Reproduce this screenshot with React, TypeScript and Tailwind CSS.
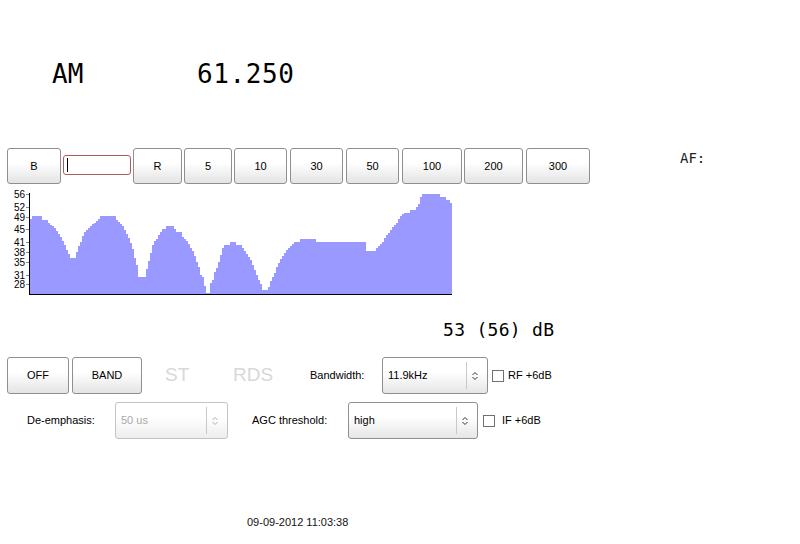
import React from "react";

const UI = "font-['Liberation_Sans',Arial,sans-serif]";
const MONO = "font-['DejaVu_Sans_Mono',monospace]";

const TOP: { label?: string; input?: boolean; cls: string }[] = [
  { label: "B", cls: "ml-[7px] w-[54px]" },
  { input: true, cls: "ml-[2px] w-[68px]" },
  { label: "R", cls: "ml-[2px] w-[49px]" },
  { label: "5", cls: "ml-[2px] w-[48px]" },
  { label: "10", cls: "ml-[2px] w-[53px]" },
  { label: "30", cls: "ml-[3px] w-[53px]" },
  { label: "50", cls: "ml-[3px] w-[53px]" },
  { label: "100", cls: "ml-[3px] w-[60px]" },
  { label: "200", cls: "ml-[2px] w-[59px]" },
  { label: "300", cls: "ml-[3px] w-[64px]" },
];

// signal strength samples (page x, page y of the top of the fill)
const PTS: [number, number][] = [
  [30, 219], [32, 216], [40, 216], [41, 220], [47, 220], [48, 223], [52, 226], [55, 229],
  [57, 232], [60, 237], [63, 243], [65, 247], [67, 252], [70, 258], [74, 258], [75, 255],
  [77, 248], [80, 242], [83, 233], [87, 229], [91, 225], [95, 222], [98, 219], [99, 216],
  [115, 216], [116, 220], [119, 223], [123, 227], [125, 232], [128, 238], [131, 245],
  [133, 253], [135, 262], [137, 268], [138, 277], [139, 280], [140, 277], [144, 277],
  [145, 274], [147, 264], [149, 257], [151, 248], [153, 242], [156, 239], [158, 235],
  [160, 232], [162, 229], [165, 229], [166, 226], [173, 226], [174, 229], [175, 232],
  [180, 232], [181, 236], [184, 239], [187, 242], [189, 246], [192, 251], [194, 256],
  [196, 262], [198, 267], [199, 274], [202, 277], [203, 283], [205, 289], [206, 293],
  [208, 293], [209, 290], [210, 283], [212, 280], [213, 274], [215, 270], [217, 265],
  [219, 258], [222, 248], [224, 245], [229, 245], [230, 242], [234, 242], [235, 245],
  [241, 245], [242, 248], [245, 252], [247, 255], [249, 258], [251, 262], [253, 267],
  [255, 272], [257, 277], [259, 282], [261, 286], [262, 290], [267, 290], [268, 287],
  [269, 283], [271, 279], [273, 275], [275, 270], [277, 264], [279, 261], [281, 257],
  [283, 254], [285, 251], [288, 248], [291, 245], [294, 242], [299, 242], [300, 239],
  [315, 239], [316, 242], [364, 242], [365, 248], [366, 251], [375, 251], [376, 248],
  [379, 245], [382, 242], [384, 238], [386, 235], [389, 232], [391, 228], [393, 226],
  [396, 223], [398, 219], [400, 216], [403, 213], [409, 213], [410, 210], [415, 210],
  [416, 207], [419, 203], [420, 197], [422, 194], [439, 194], [440, 197], [445, 197],
  [446, 200], [448, 200], [449, 203], [452, 203],
];

const LABELS: [string, number][] = [
  ["56", 194], ["52", 207], ["49", 216.5], ["45", 229], ["41", 242],
  ["38", 252], ["35", 261.5], ["31", 274.5], ["28", 284],
];

const TOP_Y = 186;

function yAt(x: number) {
  for (let i = 0; i < PTS.length - 1; i++) {
    const [x0, y0] = PTS[i];
    const [x1, y1] = PTS[i + 1];
    if (x >= x0 && x < x1) return y0 + ((y1 - y0) * (x - x0)) / (x1 - x0);
  }
  return PTS[PTS.length - 1][1];
}

function Chart() {
  let d = `M30 ${294 - TOP_Y}`;
  for (let x = 30; x < 452; x += 2) {
    const y = Math.round(yAt(x)) - TOP_Y;
    d += ` V${y} H${Math.min(x + 2, 452)}`;
  }
  d += ` V${294 - TOP_Y} Z`;

  return (
    <svg width="460" height="112" viewBox="0 0 460 112" className="block" shapeRendering="crispEdges">
      <path d={d} fill="#9999ff" />
      {LABELS.map(([t, y]) => (
        <g key={t}>
          <line x1="26" x2="29" y1={y - TOP_Y + 0.5} y2={y - TOP_Y + 0.5} stroke="#8a8a8a" />
          <text
            x="25"
            y={y - TOP_Y + 0.5}
            textAnchor="end"
            dominantBaseline="central"
            fontSize="10"
            fontFamily="'Liberation Sans', Arial, sans-serif"
            fill="#000"
            shapeRendering="auto"
          >
            {t}
          </text>
        </g>
      ))}
      <rect x="29" y={193 - TOP_Y} width="1" height="102" fill="#000" />
      <rect x="29" y={294 - TOP_Y} width="423" height="1" fill="#000" />
    </svg>
  );
}

function cn(...c: (string | false | undefined)[]) {
  return c.filter(Boolean).join(" ");
}

function Btn({ label, cls }: { label: string; cls: string }) {
  return (
    <button
      className={`${cls} flex h-full shrink-0 items-center justify-center rounded-[3px] border border-[#8f8f8f] bg-linear-to-b from-white from-40% to-[#e4e4e4] text-[11px] text-black ${UI}`}
    >
      {label}
    </button>
  );
}

function Arrows({ color }: { color: string }) {
  return (
    <svg width="6" height="10" viewBox="0 0 6 10">
      <path d="M0.5 4 L3 1.5 L5.5 4 M0.5 6 L3 8.5 L5.5 6" fill="none" stroke={color} strokeWidth="1" />
    </svg>
  );
}

function Combo({ text, cls, disabled }: { text: string; cls: string; disabled?: boolean }) {
  return (
    <div
      className={cn(
        cls,
        "flex h-[37px] shrink-0 items-stretch rounded-[3px] border bg-linear-to-b from-white from-40%",
        disabled ? "border-[#c4c4c4] to-[#ededed]" : "border-[#8f8f8f] to-[#e6e6e6]"
      )}
    >
      <span
        className={cn(
          "flex flex-1 items-center pl-[5px] text-[11px]",
          UI,
          disabled ? "text-[#a8a8a8]" : "text-black"
        )}
      >
        {text}
      </span>
      <span className="my-[4px] w-px bg-[#c8c8c8]" />
      <span className="flex w-[20px] items-center pl-[5px]">
        <Arrows color={disabled ? "#b0b0b0" : "#333"} />
      </span>
    </div>
  );
}

function Check({ label, cls, gap }: { label: string; cls: string; gap: string }) {
  return (
    <div className={cn("flex items-center", cls)}>
      <span className="h-[12px] w-[12px] border border-[#707070] bg-white" />
      <span className={cn("text-[11px] text-black", gap, UI)}>{label}</span>
    </div>
  );
}

export default function App() {
  return (
    <div className="flex h-[544px] w-[800px] flex-col overflow-hidden bg-white">
      {/* mode + frequency */}
      <div className={`flex pt-[61px] text-[26px] leading-[26px] text-black ${MONO}`}>
        <span className="ml-[52px] w-[145px]">AM</span>
        <span className="tracking-[0.6px]">61.250</span>
      </div>

      {/* step buttons */}
      <div className="mt-[61px] flex h-[36px] items-start">
        {TOP.map((b, i) =>
          b.input ? (
            <div
              key={i}
              className={`${b.cls} mt-[7px] flex h-[20px] shrink-0 items-center rounded-[3px] border border-[#b25a5a] bg-white pl-[3px]`}
            >
              <span className="h-[14px] w-px bg-black" />
            </div>
          ) : (
            <Btn key={i} label={b.label!} cls={b.cls} />
          )
        )}
        <span className={`ml-[90px] mt-[3px] text-[14px] leading-[14px] text-[#222] ${MONO}`}>AF:</span>
      </div>

      {/* signal graph */}
      <div className="mt-[2px]">
        <Chart />
      </div>

      <div className={`mt-[23px] pl-[443px] text-[18px] leading-[18px] tracking-[0.3px] text-black ${MONO}`}>
        53 (56) dB
      </div>

      {/* row 1 */}
      <div className="mt-[18px] flex h-[37px] items-center">
        <Btn label="OFF" cls="ml-[7px] w-[62px]" />
        <Btn label="BAND" cls="ml-[3px] w-[70px]" />
        <span className={`ml-[23px] w-[68px] text-[19px] text-[#d8d8d8] ${UI}`}>ST</span>
        <span className={`w-[77px] text-[19px] text-[#d8d8d8] ${UI}`}>RDS</span>
        <span className={`w-[72px] text-[11px] text-black ${UI}`}>Bandwidth:</span>
        <Combo text="11.9kHz" cls="w-[106px]" />
        <Check label="RF +6dB" cls="ml-[4px]" gap="ml-[4px]" />
      </div>

      {/* row 2 */}
      <div className="mt-[8px] flex h-[37px] items-center">
        <span className={`ml-[27px] w-[88px] text-[11px] text-black ${UI}`}>De-emphasis:</span>
        <Combo text="50 us" cls="w-[113px]" disabled />
        <span className={`ml-[24px] w-[96px] text-[11px] text-black ${UI}`}>AGC threshold:</span>
        <Combo text="high" cls="w-[130px]" />
        <Check label="IF +6dB" cls="ml-[5px]" gap="ml-[7px]" />
      </div>

      <div className={`mt-[77px] pl-[247px] text-[11px] leading-[13px] text-[#111] ${UI}`}>
        09-09-2012 11:03:38
      </div>
    </div>
  );
}
